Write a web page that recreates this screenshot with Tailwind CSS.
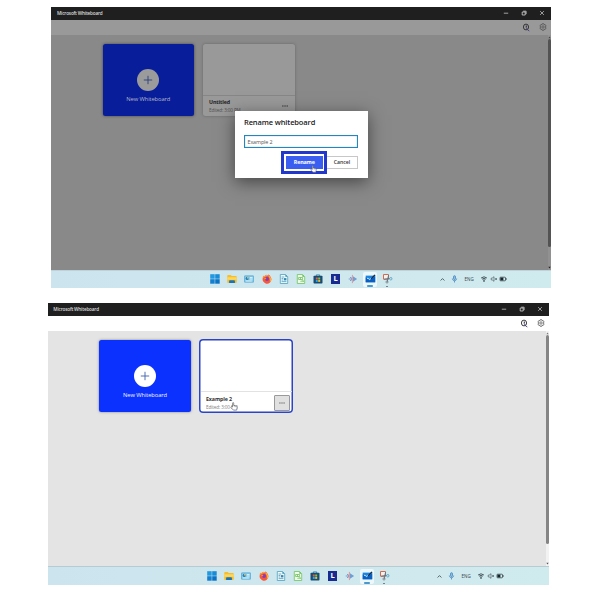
<!DOCTYPE html>
<html lang="en">
<head>
<meta charset="utf-8">
<title>Microsoft Whiteboard</title>
<script src="https://cdn.jsdelivr.net/npm/@tailwindcss/browser@4"></script>
</head>
<body class="relative w-[600px] h-[600px] overflow-hidden bg-white font-['Open_Sans','Noto_Sans',sans-serif]">

<svg class="hidden">
  <symbol id="minimize" viewBox="0 0 8 8"><path d="M1.8 4.2h4.4" stroke="#c4c4c4" stroke-width=".8"/></symbol>
  <symbol id="restore" viewBox="0 0 8 8"><path d="M2.2 3h3v3h-3zM3.2 2.2h2.9v2.9" fill="none" stroke="#d8d8d8" stroke-width=".8"/></symbol>
  <symbol id="close" viewBox="0 0 8 8"><path d="M2.1 2.1l3.8 3.8M5.9 2.1L2.1 5.9" stroke="#cfcfcf" stroke-width=".7"/></symbol>
  <symbol id="account" viewBox="0 0 8 9"><ellipse cx="4" cy="4" rx="2.6" ry="2.9" fill="none" stroke="#2a2a2e" stroke-width=".9"/><path d="M4.3 2.6v1.8" stroke="#34343c" stroke-width="1.1"/><path d="M4.3 4.6l1 2 2 1.4" fill="none" stroke="#3f3f78" stroke-width=".9"/></symbol>
  <symbol id="gear" viewBox="0 0 8 8"><path d="M3.3.7h1.4l.4 1 1.1-.1.8 1.3-.6 1.1.6 1.1-.8 1.3-1.1-.1-.4 1H3.3l-.4-1-1.1.1L1 5.1 1.6 4 1 2.9l.8-1.3 1.1.1z" fill="none" stroke="#4a4a4a" stroke-width=".75"/><circle cx="4" cy="4" r="1.2" fill="none" stroke="#4a4a4a" stroke-width=".7"/></symbol>
  <symbol id="hand" viewBox="0 0 8 9"><path d="M2.6 5V1.2c0-.9 1.1-.9 1.1 0v2.2l2.7.6c.7.2.9.6.8 1.2l-.5 2.9H3.4L.9 5.5c-.4-.7.5-1.1 1-.6z" fill="#fff" stroke="#555" stroke-width=".65"/><path d="M4.8 3.8v1.3M5.9 4v1.2" stroke="#777" stroke-width=".4"/></symbol>
</svg>

<template id="taskbar">
  <div class="flex w-[189.8px] h-full items-center">
    <div class="w-[17.25px] flex justify-center"><svg class="w-[10px] h-[10px]" viewBox="0 0 10 10"><path d="M.2.2h4.5v4.5H.2z" fill="#2299e0"/><path d="M5.2.2h4.5v4.5H5.2z" fill="#168bd8"/><path d="M.2 5.2h4.5v4.5H.2z" fill="#127fd0"/><path d="M5.2 5.2h4.5v4.5H5.2z" fill="#0a72c6"/></svg></div>
    <div class="w-[17.25px] flex justify-center"><svg class="w-[10px] h-[10px]" viewBox="0 0 10 10"><path d="M.3 1.6q0-.7.7-.7h2.7l1 1.1H9q.7 0 .7.7v5.6q0 .7-.7.7H1q-.7 0-.7-.7z" fill="#f6bd2c"/><path d="M.3 3.3h9.4v2.5H.3z" fill="#ffd75e"/><path d="M2.1 9V7q0-.8.8-.8h4.2q.8 0 .8.8v2z" fill="#1b73b5"/></svg></div>
    <div class="w-[17.25px] flex justify-center"><svg class="w-[10px] h-[10px]" viewBox="0 0 10 10"><rect x=".3" y="1.6" width="9.4" height="7" rx=".5" fill="#479fd2"/><rect x="1" y="2.3" width="8" height="5.5" fill="#8ed0ec"/><circle cx="3.2" cy="4.4" r="1.6" fill="#247fb6"/><path d="M3.2 4.4V2.8a1.6 1.6 0 0 1 1.6 1.6z" fill="#f2cd65"/><path d="M6 3.5h2.4M6 5h2.4M1.8 7h6" stroke="#e9f8ff" stroke-width=".8"/></svg></div>
    <div class="w-[17.25px] flex justify-center"><svg class="w-[10px] h-[10px]" viewBox="0 0 10 10"><path d="M1.2 1.7l1 .8Q3 1.3 4.2.8q0 .9.7 1.3L6.4.6q1.7 1 2.1 2.2.9 1 .9 2.7A4.4 4.4 0 1 1 .8 4q0-1.4.4-2.3z" fill="#f9573a"/><path d="M5.4.7Q8.8 2 9.3 5c.1 1.8-.8 2.7-1.6 3.3Q8.9 4.6 5.4.7z" fill="#ffb12b"/><path d="M1.2 1.7l1 .8Q3 1.3 4.2.8q0 .9.7 1.3Q3 2.8 1.2 4z" fill="#ffa52b"/><circle cx="5" cy="5" r="2" fill="#843dba"/><path d="M2.2 4.2q1.2-.8 2.2.3l-.8.8q-.6.2-1.2-.2z" fill="#ff8b28"/></svg></div>
    <div class="w-[17.25px] flex justify-center"><svg class="w-[10px] h-[10px]" viewBox="0 0 10 10"><path d="M1.3.5h5.2l2.2 2.2v6.8H1.3z" fill="#edf9fd" stroke="#4f9fbd" stroke-width=".8"/><path d="M6.4.6v2.2h2.2" fill="#328cae"/><path d="M2.6 3h2.7M2.6 4.5h1.6M2.6 6h1.6M2.6 7.6h4.8" stroke="#3c8fb1" stroke-width=".7"/><path d="M4.9 4.1h2.5v2.3H4.9z" fill="#3587ad"/></svg></div>
    <div class="w-[17.25px] flex justify-center"><svg class="w-[10px] h-[10px]" viewBox="0 0 10 10"><path d="M1.3.5h5.2l2.2 2.2v6.8H1.3z" fill="#effcec" stroke="#6cc45c" stroke-width=".8"/><path d="M6.4.6v2.2h2.2" fill="#58b948"/><path d="M2.6 3.5h4v2h-4zM4.5 3.5v2M5 8V6.8M6.2 8V5.8M7.4 8V6.4" fill="none" stroke="#62b852" stroke-width=".7"/></svg></div>
    <div class="w-[17.25px] flex justify-center"><svg class="w-[10px] h-[10px]" viewBox="0 0 10 10"><path d="M3.3 2V.9h3.4V2" fill="none" stroke="#227bad" stroke-width=".8"/><rect x=".5" y="1.8" width="9" height="7.7" rx=".8" fill="#164c75"/><path d="M2.8 3.5h2v2h-2z" fill="#f25734"/><path d="M5.2 3.5h2v2h-2z" fill="#8ac33c"/><path d="M2.8 5.9h2v2h-2z" fill="#27a8e9"/><path d="M5.2 5.9h2v2h-2z" fill="#f7bd2e"/></svg></div>
    <div class="w-[17.25px] flex justify-center"><div class="w-[9.6px] h-[9.6px] bg-[#192b91] text-white text-[7.5px] leading-[9.6px] font-bold text-center">L</div></div>
    <div class="w-[17.25px] flex justify-center"><svg class="w-[10px] h-[10px]" viewBox="0 0 10 10"><path d="M.7 5h2M2 3.2l1.2.7M2 6.8l1.2-.7" stroke="#6c9bcb" stroke-width=".9"/><path d="M4.4.9v8.2" stroke="#e08383" stroke-width=".8"/><path d="M5 2.3L9.1 5 5 7.7z" fill="#719ed1"/><path d="M3.3 3.6v2.8" stroke="#9a78b4" stroke-width=".9"/></svg></div>
    <div class="w-[17.25px] h-[15px] relative flex justify-center items-center"><div class="absolute inset-x-[1.3px] inset-y-0 rounded-[2px] bg-[#eef8fb]"></div><svg class="relative w-[11px] h-[10px]" viewBox="0 0 11 10"><path d="M.7 1.6h9.5v6.7H.7z" fill="#1a86e2"/><path d="M.7 3.2l3.9 3 5.6-3.7v5.8H.7z" fill="#0a5fc0"/><path d="M2.1 4.5q1.1-.8 1.5.4.4 1.2 1.7 0l1.2-1" fill="none" stroke="#fff" stroke-width=".8"/><path d="M6 4.1L9.5.4l1 .9L7 4.8l-1.3.4z" fill="#182a3d"/></svg><svg class="absolute bottom-0 w-[6px] h-[2px]" viewBox="0 0 6 2"><rect y=".3" width="6" height="1.4" rx=".7" fill="#1678c0"/></svg></div>
    <div class="w-[17.25px] h-[15px] relative flex justify-center items-center"><svg class="w-[11px] h-[12px]" viewBox="0 0 11 12"><path d="M1.5 1.5h5v4.7h-5z" fill="#f3f1ee" stroke="#d4694e" stroke-width="1"/><path d="M6.6 2.1L5.1 9.3M2.1 6.3l7.8-1.2" stroke="#667481" stroke-width="1"/><circle cx="5" cy="9" r="1.1" fill="none" stroke="#7b858c" stroke-width=".8"/><circle cx="8.8" cy="5.8" r="1.2" fill="#d5f0fa" stroke="#4e9fc0" stroke-width=".8"/></svg><div class="absolute bottom-0 w-[2px] h-[1px] rounded-full bg-[#627680]"></div></div>
  </div>
  <div class="flex items-center ml-[43px] h-full text-[#34444b]">
    <svg class="w-[7px] h-[7px]" viewBox="0 0 7 7"><path d="M1.6 4.5l1.9-1.9 1.9 1.9" fill="none" stroke="#344" stroke-width=".8"/></svg>
    <svg class="w-[7px] h-[8px] ml-[5.2px]" viewBox="0 0 7 8"><rect x="2.5" y=".7" width="2" height="4" rx="1" fill="#8abbe4" stroke="#397db8" stroke-width=".7"/><path d="M1.3 3.5c0 3 4.4 3 4.4 0M3.5 5.8v1.7" fill="none" stroke="#397db8" stroke-width=".7"/></svg>
    <span class="ml-[6.4px] w-[11px] text-[4.5px] leading-[6px]">ENG</span>
    <svg class="w-[8px] h-[8px] ml-[4.6px]" viewBox="0 0 8 8"><path d="M1.1 3q2.9-2.4 5.8 0M2.1 4.2q1.9-1.6 3.8 0M3 5.3q1-.8 2 0" fill="none" stroke="#35474e" stroke-width=".9"/><circle cx="4" cy="6.2" r=".7" fill="#35474e"/></svg>
    <svg class="w-[8px] h-[8px] ml-[1.4px]" viewBox="0 0 8 8"><path d="M1.2 3.1h1L4 1.7v4.6L2.2 4.9h-1zM5.2 3l1.7 2M6.9 3L5.2 5" fill="none" stroke="#43535a" stroke-width=".65"/></svg>
    <svg class="w-[8px] h-[8px] ml-[1.1px]" viewBox="0 0 8 8"><rect x="1" y="2.2" width="5.5" height="3.6" rx=".6" fill="none" stroke="#29363b" stroke-width=".7"/><path d="M1.4 2.6h3v2.8h-3z" fill="#17252a"/><path d="M7.2 3.2v1.6" stroke="#29363b" stroke-width=".8"/></svg>
  </div>
</template>

<main class="flex flex-col">
  <section class="relative mt-[7px] ml-[51px] w-[500px] h-[281px] flex flex-col overflow-hidden">
    <header class="h-[12.5px] shrink-0 bg-[#1f1f1f] flex items-center pl-[6px] pr-[5px]">
      <h1 class="text-[4.65px] leading-none tracking-[-.17px] text-[#dcdcdc] font-semibold grow">Microsoft Whiteboard</h1>
      <svg class="w-[8px] h-[8px]"><use href="#minimize"/></svg>
      <svg class="w-[8px] h-[8px] ml-[10px]"><use href="#restore"/></svg>
      <svg class="w-[8px] h-[8px] ml-[10px]"><use href="#close"/></svg>
    </header>
    <div class="h-[15.5px] shrink-0 bg-[#999] flex items-center justify-end pr-[4px]">
      <svg class="w-[8px] h-[9px]"><use href="#account"/></svg>
      <svg class="w-[8px] h-[8px] ml-[9px]"><use href="#gear"/></svg>
    </div>
    <div class="grow bg-[#898989] flex">
      <div class="grow flex pt-[9px] pl-[51.5px] gap-[9px]">
        <div class="w-[91.5px] h-[71.5px] rounded-[2.5px] bg-[#081d99] flex flex-col items-center pt-[25px] shadow-[0_0_3px_#444]">
          <div class="w-[22px] h-[22px] rounded-full bg-[#9b9b9b] flex items-center justify-center"><svg class="w-[10px] h-[10px]" viewBox="0 0 10 10"><path d="M5 .8v8.4M.8 5h8.4" stroke="#2b407f" stroke-width=".9"/></svg></div>
          <span class="mt-[5px] text-[5.8px] leading-[7px] tracking-[-.11px] font-medium text-[#b3b6cb]">New Whiteboard</span>
        </div>
        <div class="w-[92px] h-[71.5px] rounded-[2.5px] bg-[#999] shadow-[0_0_3px_#666] flex flex-col">
          <div class="h-[52px] shrink-0 border-b border-[#868686]"></div>
          <div class="flex grow pl-[6px] pr-[6px] pt-[2.5px]">
            <div class="grow"><div class="text-[5.3px] leading-[7.5px] tracking-[-.1px] font-bold text-[#222]">Untitled</div><div class="text-[4.6px] leading-[8px] tracking-[-.1px] text-[#505050]">Edited: 3:00 PM</div></div>
            <svg class="w-[8px] h-[8px] mt-[3px]" viewBox="0 0 8 8"><path d="M1.2 4h1.3M3.4 4h1.3M5.6 4h1.3" stroke="#2a2a2a" stroke-width="1"/></svg>
          </div>
        </div>
      </div>
      <div class="w-[3.5px] bg-[#919191] flex flex-col items-center justify-between py-[1px]">
        <svg class="w-[3px] h-[3px] shrink-0" viewBox="0 0 3 3"><path d="M1.5.5l1.2 1.8H.3z" fill="#444"/></svg>
        <div class="w-[2.5px] h-[208px] bg-[#535353] rounded-full"></div>
        <svg class="w-[3px] h-[3px] mt-auto shrink-0" viewBox="0 0 3 3"><path d="M1.5 2.5L.3.7h2.4z" fill="#222"/></svg>
      </div>
    </div>
    <footer data-taskbar class="h-[18.5px] shrink-0 bg-linear-to-r from-[#cce4ee] to-[#d0ebee] border-t border-[#c0d2d9] flex items-center pl-[155.2px]"></footer>

    <div role="dialog" class="absolute left-[183.7px] top-[103.5px] w-[133px] h-[67.5px] bg-white shadow-[0_4px_16px_rgba(0,0,0,.5)] pl-[9.3px] pr-[9.7px] pt-[6.5px]">
      <h2 class="text-[7.5px] leading-[10px] tracking-[-.13px] font-semibold text-[#222] whitespace-nowrap">Rename whiteboard</h2>
      <div class="mt-[8px] w-[114px] h-[13px] border border-[#2586bd] bg-white shadow-[inset_0_0_1px_#2586bd] pl-[2.5px] text-[5.4px] leading-[12px] tracking-[-.1px] text-[#555]">Example 2</div>
      <div class="mt-[7.5px] flex justify-end gap-[3.5px]">
        <div class="relative w-[36.5px] h-[13px] bg-[#3a5ff0] text-white text-[5.4px] leading-[13px] tracking-[-.2px] font-bold text-center">Rename
          <div class="absolute left-[-5.3px] top-[-4.3px] w-[46.7px] h-[22.8px] border-[3px] border-[#2238cc]"></div>
          <svg class="absolute left-[23.5px] top-[9px] w-[7px] h-[8px]"><use href="#hand"/></svg>
        </div>
        <div class="w-[32px] h-[13px] border border-[#c7c7c7] text-[5.2px] leading-[11.5px] font-semibold text-[#333] text-center">Cancel</div>
      </div>
    </div>
  </section>

  <section class="relative mt-[15px] ml-[48px] w-[501px] h-[282px] flex flex-col overflow-hidden">
    <header class="h-[12.5px] shrink-0 bg-[#1f1f1f] flex items-center pl-[5.3px] pr-[5px]">
      <h1 class="text-[4.65px] leading-none tracking-[-.17px] text-[#dcdcdc] font-semibold grow">Microsoft Whiteboard</h1>
      <svg class="w-[8px] h-[8px]"><use href="#minimize"/></svg>
      <svg class="w-[8px] h-[8px] ml-[10px]"><use href="#restore"/></svg>
      <svg class="w-[8px] h-[8px] ml-[10px]"><use href="#close"/></svg>
    </header>
    <div class="h-[15.5px] shrink-0 bg-white flex items-center justify-end pr-[4px]">
      <svg class="w-[8px] h-[9px]"><use href="#account"/></svg>
      <svg class="w-[8px] h-[8px] ml-[9px]"><use href="#gear"/></svg>
    </div>
    <div class="grow bg-[#e4e4e4] flex">
      <div class="grow flex pt-[8.3px] pl-[51px] gap-[8px]">
        <div class="mt-[1px] w-[92px] h-[71.7px] rounded-[2.5px] bg-[#0b31ff] flex flex-col items-center pt-[24.7px] shadow-[0_0_2.5px_#777]">
          <div class="w-[22.5px] h-[22.5px] rounded-full bg-white flex items-center justify-center"><svg class="w-[10px] h-[10px]" viewBox="0 0 10 10"><path d="M5 .8v8.4M.8 5h8.4" stroke="#4162ad" stroke-width=".9"/></svg></div>
          <span class="mt-[4.5px] text-[5.8px] leading-[7px] tracking-[-.11px] font-medium text-[#f0f3ff]">New Whiteboard</span>
        </div>
        <div class="relative w-[94px] h-[74px] rounded-[4px] bg-white p-[1px] shadow-[inset_0_0_0_1.5px_#2944c7] flex flex-col">
          <div class="h-[52px] shrink-0 mx-[.5px] border-b border-[#e2e2e2]"></div>
          <div class="flex grow pl-[6px] pr-[2px] pt-[2.5px]">
            <div class="grow"><div class="text-[5.3px] leading-[8px] tracking-[-.1px] font-bold text-[#333]">Example 2</div><div class="text-[4.6px] leading-[8px] tracking-[-.1px] text-[#808080]">Edited: 3:00 PM</div></div>
            <div class="w-[16px] h-[16px] rounded-[1px] border border-[#999] bg-[#e0e0e0] flex items-center justify-center"><svg class="w-[8px] h-[8px]" viewBox="0 0 8 8"><path d="M1.2 4h1.4M3.3 4h1.4M5.4 4h1.4" stroke="#666" stroke-width="1"/></svg></div>
          </div>
          <svg class="absolute left-[31px] top-[62.5px] w-[8px] h-[9px]"><use href="#hand"/></svg>
        </div>
      </div>
      <div class="w-[3.5px] bg-[#f2f2f2] flex flex-col items-center justify-between py-[1px]">
        <svg class="w-[3px] h-[3px] shrink-0" viewBox="0 0 3 3"><path d="M1.5.5l1.2 1.8H.3z" fill="#777"/></svg>
        <div class="w-[2.5px] h-[209px] bg-[#858585] rounded-full"></div>
        <svg class="w-[3px] h-[3px] mt-auto shrink-0" viewBox="0 0 3 3"><path d="M1.5 2.5L.3.7h2.4z" fill="#555"/></svg>
      </div>
    </div>
    <footer data-taskbar class="h-[19px] shrink-0 bg-linear-to-r from-[#cce4ee] to-[#d0ebee] border-t border-[#b7cbd2] flex items-center pl-[155.2px]"></footer>
  </section>
</main>
<script>
  const taskbar = document.getElementById('taskbar');
  document.querySelectorAll('[data-taskbar]').forEach(el => el.append(taskbar.content.cloneNode(true)));
</script>
</body>
</html>
